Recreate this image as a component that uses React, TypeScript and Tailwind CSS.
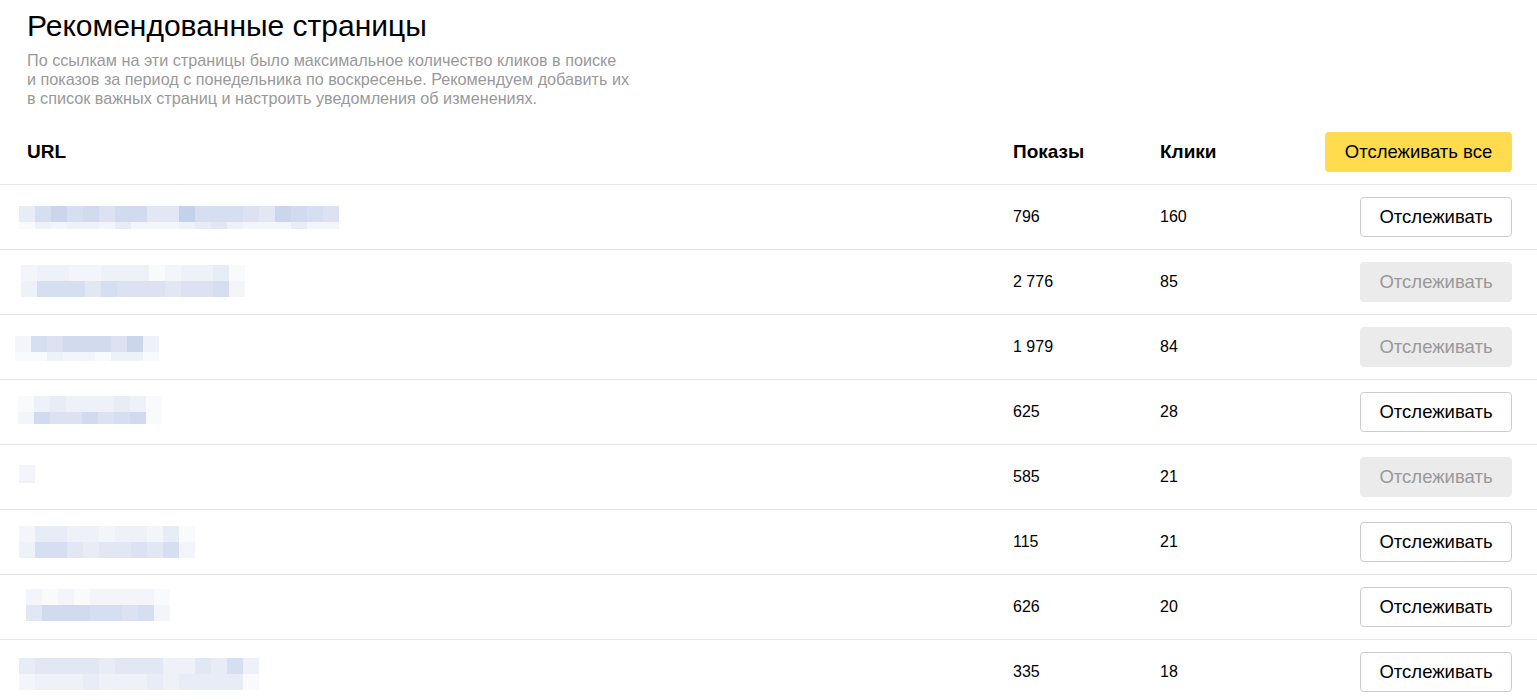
import React from "react";

// one char = one 16px cell of the pixelated (hidden) URL, lighter -> darker
const palette: Record<string, string> = {
    "0": "#f9fafc",
    "1": "#f3f5fa",
    "2": "#eef1f8",
    "3": "#e8ecf6",
    "4": "#e2e7f4",
    "5": "#dce2f2",
    "6": "#d6def1",
    "7": "#d1daef",
    "8": "#cbd5ec",
    "9": "#c4d1ea",
};

interface PageRow {
    shows: string;
    clicks: string;
    tracked: boolean;
    blur: { left: number; top: number; top_row: string; bottom_row: string; bottom_h: number };
}

const rows: PageRow[] = [
    {shows: "796", clicks: "160", tracked: false, blur: {left: 19, top: 21, top_row: "36867577449666548765", bottom_row: "02122131112342111311", bottom_h: 7}},
    {shows: "2 776", clicks: "85", tracked: true, blur: {left: 21, top: 15, top_row: "12211222012230", bottom_row: "26664655545561", bottom_h: 16}},
    {shows: "1 979", clicks: "84", tracked: true, blur: {left: 15, top: 21, top_row: "165777582", bottom_row: "002110220", bottom_h: 9}},
    {shows: "625", clicks: "28", tracked: false, blur: {left: 18, top: 16, top_row: "023222320", bottom_row: "175575670", bottom_h: 12}},
    {shows: "585", clicks: "21", tracked: true, blur: {left: 19, top: 20, top_row: "1", bottom_row: "2", bottom_h: 2}},
    {shows: "115", clicks: "21", tracked: false, blur: {left: 19, top: 16, top_row: "13322122130", bottom_row: "26643445461", bottom_h: 16}},
    {shows: "626", clicks: "20", tracked: false, blur: {left: 26, top: 14, top_row: "101011110", bottom_row: "477766561", bottom_h: 16}},
    {shows: "335", clicks: "18", tracked: false, blur: {left: 19, top: 18, top_row: "344443444224362", bottom_row: "122232223233330", bottom_h: 16}},
];

function BlurredUrl({blur}: { blur: PageRow["blur"] }) {
    return (
        <div className="flex flex-col" style={{marginLeft: blur.left - 27, marginTop: blur.top}}>
            <div className="flex">
                {blur.top_row.split("").map((c, i) => (
                    <div key={i} className="w-4 h-4" style={{backgroundColor: palette[c]}}/>
                ))}
            </div>
            <div className="flex">
                {blur.bottom_row.split("").map((c, i) => (
                    <div key={i} className="w-4" style={{height: blur.bottom_h, backgroundColor: palette[c]}}/>
                ))}
            </div>
        </div>
    );
}

export default function App() {
    return (
        <div className="min-h-screen bg-white text-black font-['Liberation_Sans',Arial,sans-serif]">
            {/* ===== TITLE ===== */}
            <div className="pl-[27px] pt-[9px] h-[120px]">
                <h1 className="text-[30px] leading-[34px] font-normal">Рекомендованные страницы</h1>
                <p className="mt-[8px] text-[16.2px] leading-[19px] text-[#999999] w-[660px]">
                    По ссылкам на эти страницы было максимальное количество кликов в поиске
                    <br/>
                    и показов за период с понедельника по воскресенье. Рекомендуем добавить их
                    <br/>
                    в список важных страниц и настроить уведомления об изменениях.
                </p>
            </div>

            {/* ===== TABLE ===== */}
            <div className="grid grid-cols-[986px_147px_165px_187px] items-center h-16 pl-[27px] pr-[25px] text-[19px] font-bold">
                <div>URL</div>
                <div>Показы</div>
                <div>Клики</div>
                <button className="h-10 w-full rounded-[4px] bg-[#ffdb4d] text-[18.5px] font-normal">
                    Отслеживать все
                </button>
            </div>

            {rows.map((row, idx) => (
                <div
                    key={idx}
                    className="grid grid-cols-[986px_147px_165px_187px] items-center h-[65px] pl-[27px] pr-[25px] border-t border-[#e5e5e5] text-[16px]"
                >
                    <div className="self-start">
                        <BlurredUrl blur={row.blur}/>
                    </div>
                    <div>{row.shows}</div>
                    <div>{row.clicks}</div>
                    <div className="flex justify-end">
                        {row.tracked ? (
                            <button className="h-10 w-[152px] rounded-[4px] bg-[#ebebeb] text-[18.5px] text-[#999999]">
                                Отслеживать
                            </button>
                        ) : (
                            <button className="h-10 w-[152px] rounded-[4px] border border-[#cccccc] bg-white text-[18.5px]">
                                Отслеживать
                            </button>
                        )}
                    </div>
                </div>
            ))}
        </div>
    );
}
